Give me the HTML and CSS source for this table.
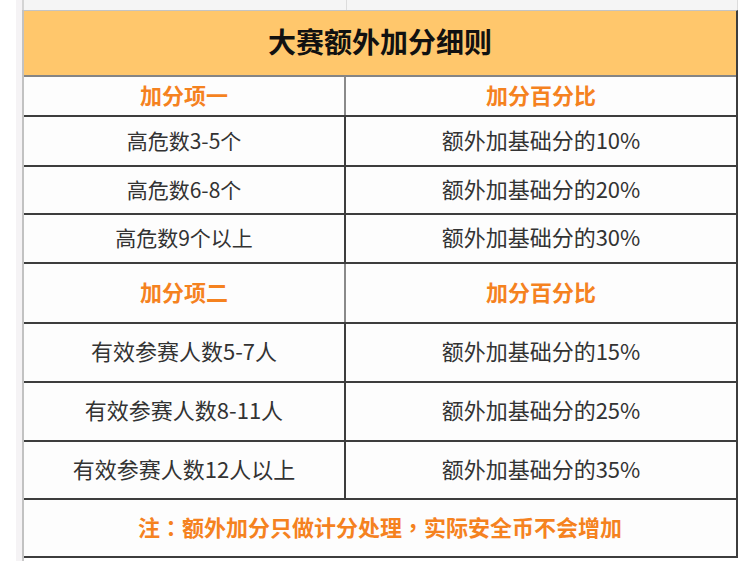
FILE: index.html
```html
<!DOCTYPE html>
<html lang="zh-CN">
<head>
<meta charset="utf-8">
<title>大赛额外加分细则</title>
<link rel="stylesheet" href="styles.css">
</head>
<body>
<div class="page">
  <div class="gutter"></div>
  <div class="sheet">
    <div class="strip"><div class="strip-left"></div><div class="strip-right"></div></div>
    <div class="table">
      <div class="row title-row"><div class="cell full title">大赛额外加分细则</div></div>
      <div class="row head h1"><div class="cell left hl">加分项一</div><div class="cell right hl">加分百分比</div></div>
      <div class="row r1"><div class="cell left small">高危数3-5个</div><div class="cell right">额外加基础分的10%</div></div>
      <div class="row r2"><div class="cell left small">高危数6-8个</div><div class="cell right">额外加基础分的20%</div></div>
      <div class="row r3"><div class="cell left small">高危数9个以上</div><div class="cell right">额外加基础分的30%</div></div>
      <div class="row head h2"><div class="cell left hl">加分项二</div><div class="cell right hl">加分百分比</div></div>
      <div class="row r4"><div class="cell left">有效参赛人数5-7人</div><div class="cell right">额外加基础分的15%</div></div>
      <div class="row r5"><div class="cell left">有效参赛人数8-11人</div><div class="cell right">额外加基础分的25%</div></div>
      <div class="row r6"><div class="cell left">有效参赛人数12人以上</div><div class="cell right">额外加基础分的35%</div></div>
      <div class="row note-row"><div class="cell full hl">注<span class="punct">：</span>额外加分只做计分处理<span class="punct">，</span>实际安全币不会增加</div></div>
    </div>
    <div class="tail"></div>
  </div>
</div>
</body>
</html>
```

FILE: styles.css
```css
html, body {
  margin: 0;
  padding: 0;
  background: #ffffff;
}
body {
  font-family: "Noto Sans CJK SC", "Noto Sans", sans-serif;
  color: #333333;
}
.page {
  display: flex;
  padding-left: 16px;
}
.gutter {
  width: 6px;
  background: #f5f3f5;
  height: 561px;
}
.sheet {
  width: 720px;
  display: flex;
  flex-direction: column;
}
.strip {
  height: 10px;
  display: flex;
  background: #f5f5f5;
  border-left: 2px solid #d4d4d4;
  width: 716px;
  box-sizing: border-box;
}
.strip-left {
  width: 322px;
  border-right: 1px solid #dcdcdc;
}
.strip-right {
  flex: 1;
  border-right: 1px solid #dcdcdc;
}
.table {
  width: 716px;
  box-sizing: border-box;
  border-left: 2px solid #c2c2c2;
  border-right: 2px solid #3d3d3d;
  border-top: 1px solid #c4c4c4;
  background: #fdfdfd;
}
.row {
  display: flex;
  border-bottom: 2px solid #3d3d3d;
}
.cell {
  display: flex;
  align-items: center;
  justify-content: center;
  font-size: 22px;
  white-space: nowrap;
  padding-bottom: 5px;
  box-sizing: border-box;
}
.cell.small {
  font-size: 21px;
  padding-bottom: 3px;
}
.left {
  width: 322px;
  flex: none;
  border-right: 2px solid #3d3d3d;
}
.right {
  flex: 1;
}
.full {
  flex: 1;
}
.hl {
  color: #f5821f;
  font-weight: 700;
}
.punct {
  font-family: "Noto Sans CJK TC", "Noto Sans CJK SC", sans-serif;
}
.head .left {
  border-right-color: #8a8a8a;
}
.title-row {
  height: 64px;
  background: #ffc76c;
  border-bottom: 2px solid #858585;
}
.title {
  font-size: 28px;
  font-weight: 700;
  color: #111111;
  padding-bottom: 4px;
}
.h1 { height: 38px; }
.r1 { height: 48px; }
.r2 { height: 46px; }
.r3 { height: 47px; }
.h2 { height: 58px; }
.r4 { height: 57px; }
.r5 { height: 57px; }
.r6 { height: 56px; }
.note-row { height: 56px; }
.tail {
  height: 3px;
  width: 2px;
  background: #c8c8c8;
}
```
